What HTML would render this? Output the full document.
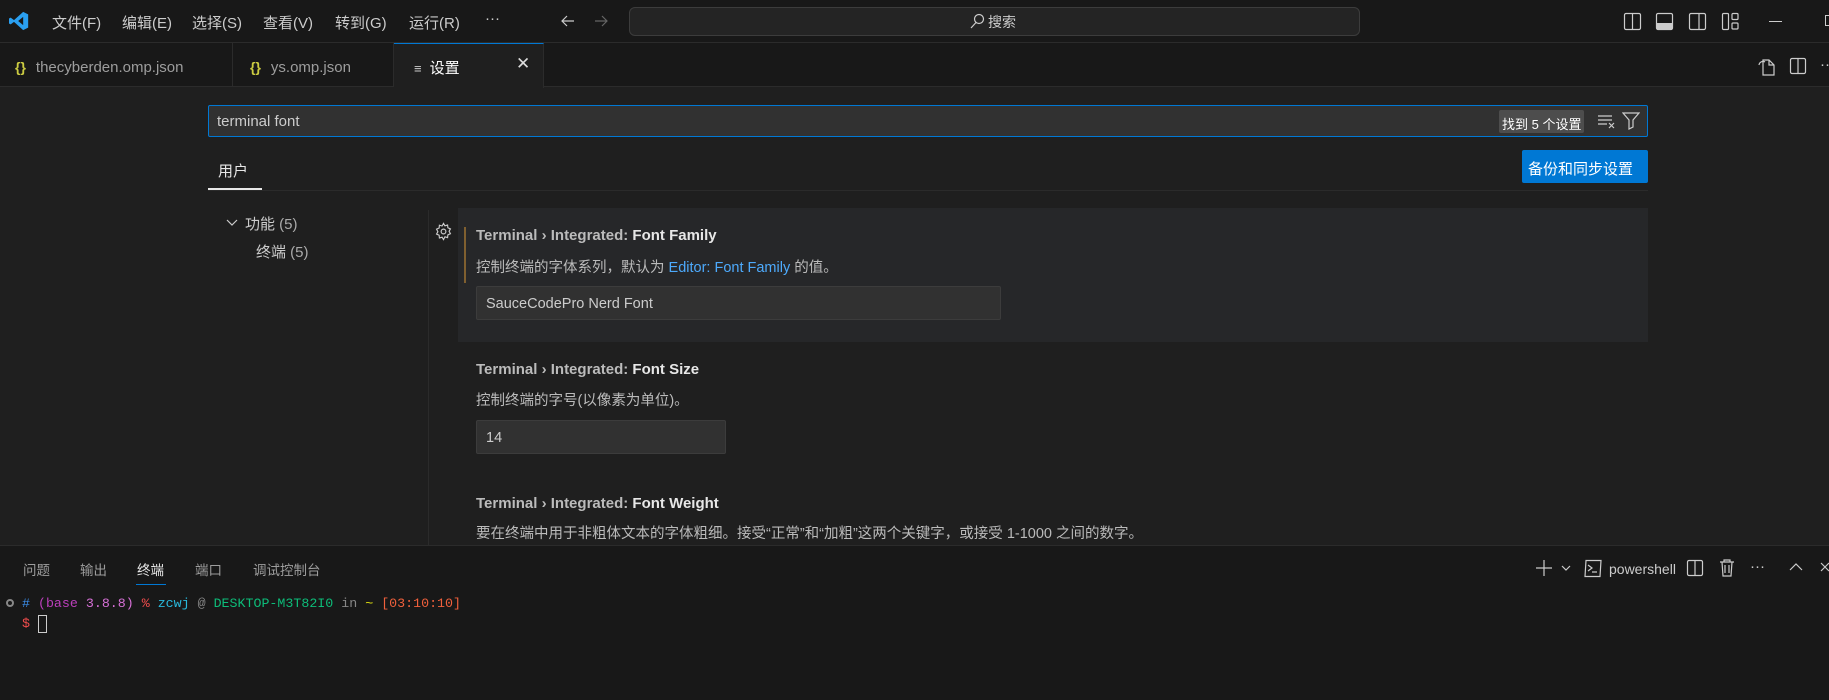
<!DOCTYPE html>
<html><head><meta charset="utf-8"><style>
*{box-sizing:border-box;margin:0;padding:0}
body{width:1829px;height:700px;overflow:hidden;background:#1f1f1f;font-family:"Liberation Sans","Noto Sans CJK SC",sans-serif;color:#ccc;position:relative}
.a{position:absolute;white-space:nowrap}
.title{left:0;top:0;width:1829px;height:43px;background:#181818;border-bottom:1px solid #2b2b2b}
.menu{top:12px;font-size:15px;color:#ccc}
.tabs{left:0;top:43px;width:1829px;height:44px;background:#181818;border-bottom:1px solid #2b2b2b}
.tab{top:43px;height:44px;font-size:15px;color:#9d9d9d;padding-top:16px;border-right:1px solid #2b2b2b}
.brace{color:#cbcb41;font-weight:bold;font-size:14px;margin-right:10px}
.ic{stroke:#ccc;fill:none;stroke-width:1.2}
.st{font-size:15px;color:#bbb;font-weight:bold}
.st b{color:#e7e7e7}
.desc{font-size:14.5px;color:#bbb}
.inp{background:#313131;border:1px solid #3c3c3c;border-radius:2px;font-size:14.5px;color:#ccc;padding:9px 0 0 9px}
.term{font-family:"Liberation Mono",monospace;font-size:13.3px}
.pt{top:559px;font-size:13.5px;color:#9d9d9d}
</style></head><body>
<div class="a title"></div>
<svg class="a" style="left:9px;top:11px" width="20" height="20" viewBox="0 0 24 24"><path d="M17 1 L23 4 V20 L17 23 L6 13 L2 16 L0 15 V9 L2 8 L6 11 L17 1Z M17 7 L11 12 L17 17Z" fill="#2a9ff0" fill-rule="evenodd"/></svg>
<div class="a menu" style="left:52px">文件(F)</div>
<div class="a menu" style="left:122px">编辑(E)</div>
<div class="a menu" style="left:192px">选择(S)</div>
<div class="a menu" style="left:263px">查看(V)</div>
<div class="a menu" style="left:335px">转到(G)</div>
<div class="a menu" style="left:409px">运行(R)</div>
<div class="a menu" style="left:485px;top:10px">···</div>
<svg class="a" style="left:560px;top:13px" width="16" height="16" viewBox="0 0 16 16"><path d="M14 8H2M7 3L2 8l5 5" class="ic"/></svg>
<svg class="a" style="left:593px;top:13px" width="16" height="16" viewBox="0 0 16 16"><path d="M2 8h12M9 3l5 5-5 5" stroke="#666" fill="none" stroke-width="1.2"/></svg>
<div class="a" style="left:629px;top:7px;width:731px;height:29px;background:#242424;border:1px solid #3c3c3c;border-radius:6px"></div>
<svg class="a" style="left:969px;top:13px" width="16" height="17" viewBox="0 0 16 17"><circle cx="10" cy="6" r="4.5" class="ic"/><path d="M7 9.5L2 15" class="ic"/></svg>
<div class="a" style="left:988px;top:12px;font-size:14px;color:#ccc">搜索</div>
<svg class="a" style="left:1623px;top:12px" width="19" height="19" viewBox="0 0 19 19"><rect x="1.5" y="1.5" width="16" height="16" rx="1.5" class="ic"/><path d="M9.5 1.5v16" class="ic"/></svg>
<svg class="a" style="left:1655px;top:12px" width="19" height="19" viewBox="0 0 19 19"><rect x="1.5" y="1.5" width="16" height="16" rx="1.5" class="ic"/><rect x="1.5" y="11" width="16" height="6.5" fill="#ccc"/></svg>
<svg class="a" style="left:1688px;top:12px" width="19" height="19" viewBox="0 0 19 19"><rect x="1.5" y="1.5" width="16" height="16" rx="1.5" class="ic"/><path d="M11 1.5v16" class="ic"/></svg>
<svg class="a" style="left:1721px;top:12px" width="19" height="19" viewBox="0 0 19 19"><rect x="1.5" y="1.5" width="6" height="16" rx="1" class="ic"/><rect x="11" y="1.5" width="6" height="6" rx="1" class="ic"/><rect x="11" y="11" width="6" height="6" rx="1" class="ic"/></svg>
<div class="a" style="left:1769px;top:21px;width:13px;height:1px;background:#ccc"></div>
<div class="a" style="left:1825px;top:15px;width:10px;height:11px;border:1px solid #ccc"></div>

<div class="a tabs"></div>
<div class="a tab" style="left:0;width:233px;padding-left:15px"><span class="brace">{}</span>thecyberden.omp.json</div>
<div class="a tab" style="left:233px;width:161px;padding-left:17px"><span class="brace">{}</span>ys.omp.json</div>
<div class="a tab" style="left:394px;width:150px;background:#1f1f1f;border-top:1px solid #0078d4;height:45px;color:#fff;padding-left:20px;padding-top:13px"><span style="font-size:13px;color:#ccc;margin-right:8px">≡</span>设置<span style="position:absolute;left:122px;top:10px;font-size:17px;color:#ddd">✕</span></div>
<svg class="a" style="left:1756px;top:56px" width="22" height="20" viewBox="0 0 22 20"><path d="M7 4h6l5 5v10H7z M13 4v5h5" class="ic"/><path d="M3 9a4 4 0 0 1 6-3" class="ic"/></svg>
<svg class="a" style="left:1789px;top:57px" width="18" height="18" viewBox="0 0 18 18"><rect x="1.5" y="1.5" width="15" height="15" rx="1.5" class="ic"/><path d="M9 1.5v15" class="ic"/></svg>
<div class="a" style="left:1820px;top:56px;color:#ccc;font-size:15px">··</div>

<div class="a" style="left:208px;top:105px;width:1440px;height:32px;background:#313131;border:1px solid #0078d4;border-radius:2px"></div>
<div class="a" style="left:217px;top:113px;font-size:15px;color:#ccc">terminal font</div>
<div class="a" style="left:1499px;top:110px;height:23px;background:#4d4d4d;border-radius:2px;font-size:13px;color:#fff;padding:4px 3px 0 3px">找到 5 个设置</div>
<svg class="a" style="left:1597px;top:112px" width="20" height="18" viewBox="0 0 20 18"><path d="M1 4h14M1 8h14M1 12h9M12 11l5 5M17 11l-5 5" class="ic"/></svg>
<svg class="a" style="left:1622px;top:111px" width="18" height="19" viewBox="0 0 18 19"><path d="M1 2h16l-6 7v7l-4 2V9z" class="ic"/></svg>
<div class="a" style="left:218px;top:160px;font-size:15px;color:#e7e7e7">用户</div>
<div class="a" style="left:208px;top:188px;width:54px;height:2px;background:#e7e7e7"></div>
<div class="a" style="left:208px;top:190px;width:1440px;height:1px;background:#2b2b2b"></div>
<div class="a" style="left:1522px;top:150px;width:126px;height:33px;background:#0078d4;border-radius:2px;color:#fff;font-size:15px;padding:8px 0 0 6px">备份和同步设置</div>

<svg class="a" style="left:225px;top:216px" width="14" height="14" viewBox="0 0 14 14"><path d="M2 4l5 5 5-5" class="ic"/></svg>
<div class="a" style="left:245px;top:213px;font-size:15px;color:#ccc">功能 <span style="color:#aaa">(5)</span></div>
<div class="a" style="left:256px;top:241px;font-size:15px;color:#ccc">终端 <span style="color:#aaa">(5)</span></div>
<div class="a" style="left:428px;top:210px;width:1px;height:335px;background:#2b2b2b"></div>

<div class="a" style="left:458px;top:208px;width:1190px;height:134px;background:#262729"></div>
<svg class="a" style="left:434px;top:222px" width="19" height="19" viewBox="0 0 20 20"><path d="M10 1.5l1.5 2.5 2.8-.8.3 2.9 2.7 1.2-1.4 2.5 1.4 2.5-2.7 1.2-.3 2.9-2.8-.8L10 18.5l-1.5-2.5-2.8.8-.3-2.9-2.7-1.2 1.4-2.5L2.7 7.5l2.7-1.2.3-2.9 2.8.8z" class="ic"/><circle cx="10" cy="10" r="2.5" class="ic"/></svg>
<div class="a" style="left:464px;top:227px;width:2px;height:56px;background:#7f5f2f"></div>
<div class="a st" style="left:476px;top:227px">Terminal › Integrated: <b>Font Family</b></div>
<div class="a desc" style="left:476px;top:256px">控制终端的字体系列，默认为 <span style="color:#4daafc">Editor: Font Family</span> 的值。</div>
<div class="a inp" style="left:476px;top:286px;width:525px;height:34px">SauceCodePro Nerd Font</div>

<div class="a st" style="left:476px;top:361px">Terminal › Integrated: <b>Font Size</b></div>
<div class="a desc" style="left:476px;top:389px">控制终端的字号(以像素为单位)。</div>
<div class="a inp" style="left:476px;top:420px;width:250px;height:34px">14</div>

<div class="a st" style="left:476px;top:495px">Terminal › Integrated: <b>Font Weight</b></div>
<div class="a desc" style="left:476px;top:522px">要在终端中用于非粗体文本的字体粗细。接受“正常”和“加粗”这两个关键字，或接受 1-1000 之间的数字。</div>

<div class="a" style="left:0;top:545px;width:1829px;height:155px;background:#181818;border-top:1px solid #2b2b2b"></div>
<div class="a pt" style="left:23px">问题</div>
<div class="a pt" style="left:80px">输出</div>
<div class="a pt" style="left:137px;color:#e7e7e7">终端</div>
<div class="a" style="left:136px;top:584px;width:30px;height:1px;background:#0078d4"></div>
<div class="a pt" style="left:195px">端口</div>
<div class="a pt" style="left:253px">调试控制台</div>

<svg class="a" style="left:1535px;top:559px" width="18" height="18" viewBox="0 0 18 18"><path d="M9 1v16M1 9h16" class="ic"/></svg>
<svg class="a" style="left:1560px;top:563px" width="12" height="10" viewBox="0 0 12 10"><path d="M2 3l4 4 4-4" class="ic"/></svg>
<svg class="a" style="left:1583px;top:559px" width="20" height="19" viewBox="0 0 20 19"><path d="M3 1.5h15l-1 16H2z M5 6l4 3-4 3M9 13h5" class="ic"/></svg>
<div class="a" style="left:1609px;top:561px;font-size:14px;color:#ccc">powershell</div>
<svg class="a" style="left:1686px;top:559px" width="18" height="18" viewBox="0 0 18 18"><rect x="1.5" y="1.5" width="15" height="15" rx="1.5" class="ic"/><path d="M9 1.5v15" class="ic"/></svg>
<svg class="a" style="left:1719px;top:558px" width="16" height="19" viewBox="0 0 16 19"><path d="M1 4h14M5 4V2h6v2M3 4l1 14h8l1-14M6 7v8M10 7v8" class="ic"/></svg>
<div class="a" style="left:1750px;top:558px;font-size:15px;color:#ccc">···</div>
<svg class="a" style="left:1788px;top:561px" width="16" height="12" viewBox="0 0 16 12"><path d="M2 9l6-6 6 6" class="ic"/></svg>
<svg class="a" style="left:1819px;top:561px" width="12" height="14" viewBox="0 0 12 14"><path d="M2 2l8 8M10 2l-8 8" class="ic"/></svg>

<div class="a" style="left:6px;top:599px;width:8px;height:8px;border-radius:50%;border:2px solid #888"></div>
<div class="a term" style="left:22px;top:596px"><span style="color:#3b8eea">#</span> <span style="color:#bc3fbc">(base</span> <span style="color:#d670d6">3.8.8)</span> <span style="color:#f14c4c">%</span> <span style="color:#29b8db">zcwj</span> <span style="color:#888">@</span> <span style="color:#0dbc79">DESKTOP-M3T82I0</span> <span style="color:#888">in</span> <span style="color:#e5e510">~</span> <span style="color:#f0603c">[03:10:10]</span></div>
<div class="a term" style="left:22px;top:616px;color:#f14c4c">$</div>
<div class="a" style="left:38px;top:615px;width:9px;height:18px;border:1px solid #ccc"></div>
</body></html>
